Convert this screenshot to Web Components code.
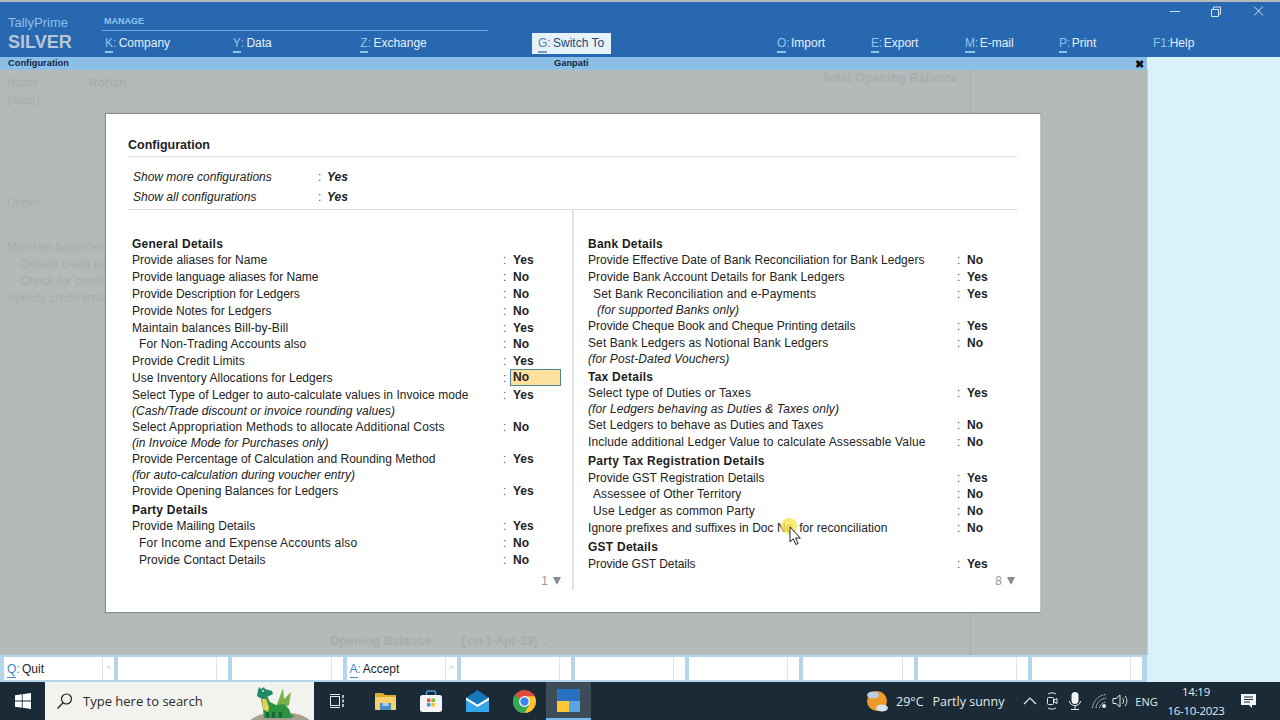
<!DOCTYPE html>
<html lang="en">
<head>
<meta charset="utf-8">
<title>TallyPrime Configuration</title>
<style>
html, body { margin: 0; height: 100%; overflow: hidden; background: #b4b9ba; }
body { font: 12px "Liberation Sans", Arial, sans-serif; }
</style>
</head>
<body>
<tally-app></tally-app>

<script>
"use strict";

/* small helper: every element gets an open shadow root with its own css + html */
function makeEl(tag, render) {
  customElements.define(tag, class extends HTMLElement {
    constructor() {
      super();
      this.attachShadow({ mode: 'open' });
    }
    connectedCallback() {
      this.shadowRoot.innerHTML = render(this);
    }
  });
}

/* ---------- top menu ---------- */
makeEl('menu-item', (el) => `
  <style>
    :host { display: block; width: ${el.getAttribute('w') || 94}px; color: #e6effa; font-size: 12px; line-height: 14px; white-space: nowrap; }
    b { font-weight: normal; color: #8fc3ef; display: inline-block; margin-right: ${el.getAttribute('mr') || -1}px; }
    u { text-decoration: none; display: inline-block; border-bottom: 2px solid #8fc3ef; padding-bottom: 1px; }
    :host([nokey]) u { border-bottom-color: transparent; }
    :host([active]) { color: #24476e; }
    :host([active]) b, :host([active]) u { color: #5d7ea6; border-bottom-color: #7d9cc2; }
  </style>
  <b><u>${el.getAttribute('k')}</u>:</b> <slot></slot>`);

makeEl('window-controls', () => `
  <style>
    :host { display: flex; position: absolute; top: 1px; right: 0; }
    svg { display: block; width: 42px; height: 16px; }
  </style>
  <svg viewBox="0 0 42 16"><path d="M14 8.500h10" stroke="#cfe0f3" stroke-width="1"/></svg>
  <svg viewBox="0 0 42 16"><path d="M13.500 6.500h7v7h-7zM15.500 6.500v-2.500h7v7h-2" fill="none" stroke="#dbe7f5" stroke-width="1"/></svg>
  <svg viewBox="0 0 42 16" style="width:40px"><path d="M15 3.500l9 9M24 3.500l-9 9" stroke="#dbe7f5" stroke-width="1"/></svg>`);

makeEl('tally-header', () => `
  <style>
    :host { display: flex; position: relative; height: 55px; margin-top: 2px; background: #2868b0; box-sizing: border-box; }
    .brand { width: 104px; padding: 13px 0 0 8px; box-sizing: border-box; }
    .brand div:first-child { color: #8cc0ec; font-size: 13px; line-height: 15px; }
    .brand div:last-child { color: #b7c6d8; font-size: 18px; font-weight: bold; line-height: 22px; margin-top: 1px; }
    .manage { width: 386px; margin-left: -2px; }
    .manage small { display: block; height: 15px; margin: 12px 0 0 2px; color: #8fc3ef; font-size: 9px; font-weight: bold; line-height: 14px; }
    .manage hr { border: 0; height: 1px; background: #6fa9e2; margin: 1px 0 5px; }
    .manage .items { display: flex; padding-left: 3px; }
    .switch { width: 79px; height: 21px; margin: 31px 0 0 44px; background: #e5f1fb; padding: 3px 0 0 6px; box-sizing: border-box; }
    .right { display: flex; margin: 34px 0 0 166px; }
  </style>
  <div class="brand"><div>TallyPrime</div><div>SILVER</div></div>
  <div class="manage">
    <small>MANAGE</small><hr>
    <div class="items">
      <menu-item k="K" w="128">Company</menu-item>
      <menu-item k="Y" w="128">Data</menu-item>
      <menu-item k="Z" w="128">Exchange</menu-item>
    </div>
  </div>
  <div class="switch"><menu-item k="G" w="73" active>Switch To</menu-item></div>
  <div class="right">
    <menu-item k="O" mr="-2">Import</menu-item>
    <menu-item k="E" mr="-2">Export</menu-item>
    <menu-item k="M" mr="-2">E-mail</menu-item>
    <menu-item k="P" mr="-2">Print</menu-item>
    <menu-item k="F1" w="50" mr="-4" nokey>Help</menu-item>
  </div>
  <window-controls></window-controls>`);

makeEl('tally-subbar', () => `
  <style>
    :host { display: flex; height: 13px; background: #8cbfe8; color: #10253f; font-size: 9.300px; font-weight: bold; line-height: 13px; }
    .left { width: 554px; padding-left: 8px; box-sizing: border-box; }
    .mid { width: 578px; }
    .x { width: 15px; text-align: center; font-size: 11px; color: #111; line-height: 14px; }
    .side { flex: 1; background: #daf0fb; }
  </style>
  <div class="left">Configuration</div>
  <div class="mid">Ganpati</div>
  <div class="x">✖</div>
  <div class="side"></div>`);

/* ---------- faded ledger form behind the dialog ---------- */
makeEl('ledger-backdrop', () => `
  <style>
    :host { display: flex; flex-direction: column; height: 100%; color: #a8adae; font-size: 12px; line-height: 17px; box-sizing: border-box; padding: 0 0 5px 7px; border-right: 1px solid #a8adae; width: 971px; }
    .name { display: flex; padding-top: 5px; align-items: flex-start; }
    .name span:first-child { width: 82px; }
    b { font-weight: bold; }
    .total { position: absolute; left: 822px; top: 0; font-weight: bold; line-height: 16px; letter-spacing: .33px; }
    i { display: block; }
    .under { margin-top: 86px; }
    .bal { margin-top: 27px; white-space: nowrap; }
    .bal div { padding-left: 13px; }
    .bal div:last-child { padding-left: 0; }
    .open { margin-top: auto; padding-left: 323px; font-weight: bold; letter-spacing: .2px; }
    .open span { margin-left: 27px; letter-spacing: 0; word-spacing: -1px; }
  </style>
  <div class="name"><span>Name</span><b>Rohan</b></div>
  <div class="total">Total Opening Balance</div>
  <i>(alias)</i>
  <div class="under">Under</div>
  <div class="bal">
    Maintain balances
    <div>Default credit pe</div>
    <div>Check for credit</div>
    <div>Specify credit limit</div>
  </div>
  <div class="open">Opening Balance <span>( on 1-Apr-23)&nbsp; :</span></div>`);

/* ---------- dialog ---------- */
makeEl('config-heading', (el) => `
  <style>
    :host { display: block; height: ${el.getAttribute('h') || 16}px; margin-top: ${el.getAttribute('mt') || 0}px; font-size: 12px; font-weight: bold; line-height: 16px; color: #1c1c1c; letter-spacing: .25px; }
  </style>
  <slot></slot>`);

/* ls = per row letter spacing, the original text has hinted widths */
makeEl('config-row', (el) => `
  <style>
    :host { display: grid; grid-template-columns: 1fr 10px 51px; height: ${el.getAttribute('h') || 17}px; line-height: ${el.getAttribute('h') || 17}px; font-size: 12px; color: #222; letter-spacing: ${el.getAttribute('ls') || .05}px; white-space: nowrap; }
    :host([note]) { font-style: italic; }
    .label { padding-left: ${el.getAttribute('indent') || 0}px; }
    .colon { color: #555; padding-left: 3px; }
    .val { font-weight: bold; padding-left: 3px; box-sizing: border-box; letter-spacing: 0; }
    :host([focus]) .val { background: #fde09c; border: 1px solid #4b8a9e; line-height: 15px; padding-left: 2px; height: 17px; margin-top: -1px; }
  </style>
  <div class="label"><slot></slot></div>
  <div class="colon">${el.hasAttribute('value') ? ':' : ''}</div>
  <div class="val">${el.getAttribute('value') || ''}</div>`);

makeEl('config-column', (el) => `
  <style>
    :host { display: flex; flex-direction: column; box-sizing: border-box; padding-top: 26px; }
    .page { display: flex; justify-content: flex-end; align-items: center; gap: 5px; margin-top: auto; height: 18px; line-height: 18px; color: #999; font-size: 12px; }
    .page span { width: 0; height: 0; border: 4.500px solid transparent; border-top: 8px solid #8a8a8a; border-bottom: 0; }
  </style>
  <slot></slot>
  <div class="page">${el.getAttribute('page')}<span></span></div>`);

makeEl('show-row', (el) => `
  <style>
    :host { display: flex; height: 21px; line-height: ${el.getAttribute('lh') || 21}px; padding-left: 5px; font-size: 12px; color: #222; }
    i { width: 185px; }
    span { width: 9px; color: #555; }
    b { font-style: italic; }
  </style>
  <i><slot></slot></i><span>:</span><b>${el.getAttribute('value')}</b>`);

makeEl('config-dialog', () => `
  <style>
    :host { display: block; position: absolute; left: 105px; top: 43px; width: 936px; height: 500px; box-sizing: border-box; background: #fff; border: 1px solid #8a8d8e; border-right-color: #c4c8c8; padding: 22px 23px 0 22px; box-shadow: 0 0 1px #8a8d8e; }
    h1 { margin: 0; height: 19px; font-size: 12.500px; line-height: 19px; font-weight: bold; color: #1d1d1d; border-bottom: 1px solid #dcdcdc; padding-bottom: 1px; }
    .show { padding: 9px 0 1px; border-bottom: 1px solid #dcdcdc; height: 42px; }
    .cols { display: grid; grid-template-columns: 446px 1fr; height: 378px; }
    .cols > config-column:first-child { padding-left: 4px; padding-right: 11px; border-right: 2px solid #e2e2e2; }
    .cols > config-column:last-child { padding-left: 14px; padding-right: 2px; }
  </style>
  <h1>Configuration</h1>
  <div class="show">
    <show-row value="Yes" lh="23">Show more configurations</show-row>
    <show-row value="Yes">Show all configurations</show-row>
  </div>
  <div class="cols">
    <config-column page="1">
      <config-heading>General Details</config-heading>
      <config-row value="Yes">Provide aliases for Name</config-row>
      <config-row value="No" ls="-.01">Provide language aliases for Name</config-row>
      <config-row value="No" ls="-.01">Provide Description for Ledgers</config-row>
      <config-row value="No" ls="0">Provide Notes for Ledgers</config-row>
      <config-row value="Yes" h="16" ls=".12">Maintain balances Bill-by-Bill</config-row>
      <config-row value="No" indent="7" ls=".08">For Non-Trading Accounts also</config-row>
      <config-row value="Yes" ls=".1">Provide Credit Limits</config-row>
      <config-row value="No" focus>Use Inventory Allocations for Ledgers</config-row>
      <config-row value="Yes">Select Type of Ledger to auto-calculate values in Invoice mode</config-row>
      <config-row note h="15">(Cash/Trade discount or invoice rounding values)</config-row>
      <config-row value="No" h="16" ls=".15">Select Appropriation Methods to allocate Additional Costs</config-row>
      <config-row note h="16">(in Invoice Mode for Purchases only)</config-row>
      <config-row value="Yes" h="16" ls=".01">Provide Percentage of Calculation and Rounding Method</config-row>
      <config-row note h="16" ls=".02">(for auto-calculation during voucher entry)</config-row>
      <config-row value="Yes" h="16" ls="0">Provide Opening Balances for Ledgers</config-row>
      <config-heading mt="3">Party Details</config-heading>
      <config-row value="Yes">Provide Mailing Details</config-row>
      <config-row value="No" indent="7" ls=".19">For Income and Expense Accounts also</config-row>
      <config-row value="No" indent="7">Provide Contact Details</config-row>
    </config-column>
    <config-column page="8">
      <config-heading>Bank Details</config-heading>
      <config-row value="No" ls=".02">Provide Effective Date of Bank Reconciliation for Bank Ledgers</config-row>
      <config-row value="Yes" ls=".1">Provide Bank Account Details for Bank Ledgers</config-row>
      <config-row value="Yes" h="16" indent="5" ls=".15">Set Bank Reconciliation and e-Payments</config-row>
      <config-row note h="16" indent="9">(for supported Banks only)</config-row>
      <config-row value="Yes" ls="0">Provide Cheque Book and Cheque Printing details</config-row>
      <config-row value="No" h="16" ls=".1">Set Bank Ledgers as Notional Bank Ledgers</config-row>
      <config-row note h="16" ls=".1">(for Post-Dated Vouchers)</config-row>
      <config-heading mt="2">Tax Details</config-heading>
      <config-row value="Yes" h="16" ls=".15">Select type of Duties or Taxes</config-row>
      <config-row note h="16" ls=".12">(for Ledgers behaving as Duties &amp; Taxes only)</config-row>
      <config-row value="No" ls=".08">Set Ledgers to behave as Duties and Taxes</config-row>
      <config-row value="No" h="16" ls=".15">Include additional Ledger Value to calculate Assessable Value</config-row>
      <config-heading mt="3" h="17">Party Tax Registration Details</config-heading>
      <config-row value="Yes" h="16" ls=".02">Provide GST Registration Details</config-row>
      <config-row value="No" indent="5" ls=".12">Assessee of Other Territory</config-row>
      <config-row value="No" indent="5" ls=".12">Use Ledger as common Party</config-row>
      <config-row value="No">Ignore prefixes and suffixes in Doc No. for reconciliation</config-row>
      <config-heading mt="2" h="17">GST Details</config-heading>
      <config-row value="Yes" h="16" ls="-.05">Provide GST Details</config-row>
    </config-column>
  </div>`);

makeEl('mouse-pointer', () => `
  <style>
    :host { display: block; position: absolute; left: 778px; top: 447px; width: 28px; height: 32px; pointer-events: none; }
    svg { display: block; }
  </style>
  <svg width="28" height="32" viewBox="0 0 28 32">
    <circle cx="11" cy="9" r="8" fill="#f7e34a" opacity=".8"/>
    <path d="M12 10v15l3.300-3.200 2.500 5.700 2.300-1-2.500-5.400h4.700z" fill="#fff" stroke="#222" stroke-width="1"/>
  </svg>`);

/* ---------- bottom button bar ---------- */
makeEl('bar-button', (el) => `
  <style>
    :host { display: flex; height: 23px; background: #fff; font-size: 12px; line-height: 24px; color: #222; }
    .txt { flex: 1; padding-left: 3px; border-right: 1px solid #dde3e7; white-space: nowrap; }
    b { font-weight: normal; color: #3c86c4; margin-right: -1px; }
    u { text-decoration: none; display: inline-block; border-bottom: 1px solid #3c86c4; line-height: 15px; }
    .up { width: 11px; text-align: center; color: #c5cdd3; font-size: 9px; }
  </style>
  <div class="txt">${el.hasAttribute('k') ? `<b><u>${el.getAttribute('k')}</u>:</b> ` : ''}<slot></slot></div>
  <div class="up">${el.hasAttribute('k') ? '^' : ''}</div>`);

makeEl('button-bar', () => `
  <style>
    :host { display: grid; grid-template-columns: repeat(10, 1fr); gap: 4px; height: 27px; width: 1147px; box-sizing: border-box; padding: 2px 5px 2px 4px; background: #b4d5ec; }
  </style>
  <bar-button k="Q">Quit</bar-button>
  <bar-button></bar-button>
  <bar-button></bar-button>
  <bar-button k="A">Accept</bar-button>
  <bar-button></bar-button>
  <bar-button></bar-button>
  <bar-button></bar-button>
  <bar-button></bar-button>
  <bar-button></bar-button>
  <bar-button></bar-button>`);

/* ---------- windows taskbar ---------- */
makeEl('task-icon', (el) => `
  <style>
    :host { display: flex; align-items: center; justify-content: center; width: ${el.getAttribute('w') || 46}px; height: 38px; box-sizing: border-box; }
    :host([active]) { background: #3e4c58; border-bottom: 2px solid #76b9ed; }
  </style>
  <slot></slot>`);

makeEl('win-taskbar', () => `
  <style>
    :host { display: flex; align-items: center; height: 38px; background: #1a2a36; color: #e4e8ea; font-family: "Open Sans", sans-serif; }
    .search { display: flex; align-items: center; width: 269px; height: 38px; background: #f2f2ef; color: #2b2b2b; font-size: 13px; box-sizing: border-box; padding-left: 11px; position: relative; overflow: hidden; }
    .search span { margin-left: 9px; }
    .dragon { position: absolute; left: 203px; top: 3px; }
    .icons { display: flex; }
    .tray { display: flex; align-items: center; margin-left: auto; height: 38px; padding-right: 13px; }
    .temp { font-size: 12.500px; margin-left: 7px; width: 125px; white-space: nowrap; }
    .temp span { margin-left: 9px; }
    .tray svg { display: block; }
    .eng { font-size: 11px; width: 29px; margin-left: 4px; text-align: center; }
    .clock { width: 70px; font-size: 11.500px; line-height: 19px; text-align: center; letter-spacing: -.3px; }
    .start { display: flex; justify-content: center; align-items: center; width: 45px; }
  </style>
  <div class="start">
    <svg width="16" height="16" viewBox="0 0 16 16"><path d="M0 2.300l6.800-1v6.300H0zM7.600 1.200L16 0v7.600H7.600zM0 8.400h6.800v6.300l-6.800-1zM7.600 8.400H16V16l-8.400-1.200z" fill="#fff"/></svg>
  </div>
  <div class="search">
    <svg width="18" height="18" viewBox="0 0 18 18"><circle cx="10.500" cy="7" r="5" fill="none" stroke="#222" stroke-width="1.200"/><path d="M7 10.800L1.500 16.500" stroke="#222" stroke-width="1.300"/></svg>
    <span>Type here to search</span>
    <svg class="dragon" width="66" height="35" viewBox="0 0 66 35">
      <ellipse cx="32" cy="40" rx="32" ry="13" fill="#a89f8f"/>
      <path d="M28 22L35 3l1 11 7-7-2 13-11 6z" fill="#7ab04a"/>
      <path d="M13 14l6-3 3 6 6 3 8-1 5 5 2 6 4 1-4 2H16l-1-9z" fill="#2c9440"/>
      <path d="M14 14h4l3 8-1 5-5-3z" fill="#e6cf55"/>
      <path d="M10 5l1-3 2 2 3-2 1 2 7 2 1 3-6 3-3 2-4-1-3-2z" fill="#1f8a6e"/>
      <circle cx="15" cy="6" r="1" fill="#f4e9a0"/>
      <path d="M18 27h3v6h-3zM24 27h3v6h-3zM31 27h3v6h-3z" fill="#176a38"/>
    </svg>
  </div>
  <div class="icons">
    <task-icon>
      <svg width="16" height="14" viewBox="0 0 16 14"><path d="M1 .500h10M1 13.500h10" stroke="#e8e8e8"/><rect x="1.500" y="2.500" width="9" height="9" fill="none" stroke="#e8e8e8"/><path d="M14 1v3M14 5.500v3M14 10v3" stroke="#e8e8e8" stroke-width="1.500"/></svg>
    </task-icon>
    <task-icon w="50">
      <svg width="21" height="17" viewBox="0 0 21 17"><path d="M0 1a1 1 0 0 1 1-1h7l2 2h10a1 1 0 0 1 1 1v3H0z" fill="#e0ab32"/><rect x="0" y="4" width="21" height="13" rx="1" fill="#f6d26c"/><rect x="5" y="10" width="11" height="7" fill="#4a8cc4"/><rect x="7.500" y="10" width="6" height="3" fill="#a8d0ea"/></svg>
    </task-icon>
    <task-icon w="42">
      <svg width="22" height="22" viewBox="0 0 22 22"><path d="M6.500 5V2.500a1.500 1.500 0 0 1 1.500-1.500h6a1.500 1.500 0 0 1 1.500 1.500V5" fill="none" stroke="#4aa2dc" stroke-width="1.500"/><rect x="0" y="5" width="22" height="17" rx="2.500" fill="#f2f4f5"/><rect x="7" y="8.500" width="3.500" height="3.500" fill="#e75a32"/><rect x="11.500" y="8.500" width="3.500" height="3.500" fill="#7fba3c"/><rect x="7" y="13" width="3.500" height="3.500" fill="#2f9ae0"/><rect x="11.500" y="13" width="3.500" height="3.500" fill="#f5c02c"/></svg>
    </task-icon>
    <task-icon w="50">
      <svg width="23" height="22" viewBox="0 0 23 22"><path d="M0 8L11.500 0 23 8v14H0z" fill="#1677bd"/><path d="M0 8.500l11.500 7 11.500-7V21a1 1 0 0 1-1 1H1a1 1 0 0 1-1-1z" fill="#34a6ea"/><path d="M0 7.500l11.500 7 11.500-7v2.500l-11.500 7L0 10z" fill="#fff"/></svg>
    </task-icon>
    <task-icon w="44">
      <svg width="23" height="23" viewBox="0 0 22 22"><circle cx="11" cy="11" r="11" fill="#dd4b3d"/><path d="M11 6h9.700a11 11 0 0 1-9.900 16L16 13z" fill="#f9c42e"/><path d="M2 4.500a11 11 0 0 0 8.800 17.500L16 13l-5 1z" fill="#35a853"/><circle cx="11" cy="11" r="5.200" fill="#fff"/><circle cx="11" cy="11" r="4" fill="#3e82ee"/></svg>
    </task-icon>
    <task-icon w="45" active>
      <svg width="23" height="23" viewBox="0 0 23 23"><rect x="0" y="0" width="23" height="12" fill="#2870c0"/><rect x="0" y="12" width="12" height="11" fill="#fbc83c"/><rect x="12" y="12" width="11" height="11" fill="#5aa5e3"/></svg>
    </task-icon>
  </div>
  <div class="tray">
    <svg width="24" height="24" viewBox="0 0 24 24"><circle cx="12" cy="12" r="10" fill="#ee9a2b"/><ellipse cx="8" cy="6" rx="6" ry="3.500" fill="#b9cfe2"/><ellipse cx="17" cy="19" rx="6" ry="3.500" fill="#d7e3ee"/></svg>
    <div class="temp">29°C<span>Partly sunny</span></div>
    <svg width="16" height="10" viewBox="0 0 16 10" style="margin-left:1px"><path d="M2 8l6-6 6 6" fill="none" stroke="#e4e8ea" stroke-width="1.200"/></svg>
    <svg width="14" height="20" viewBox="0 0 14 20" style="margin-left:7px"><path d="M3 3c2-1.500 6-1.500 8 0M3 17c2 1.500 6 1.500 8 0" fill="none" stroke="#e4e8ea"/><rect x="2.500" y="6.500" width="6" height="7" rx="1" fill="none" stroke="#e4e8ea"/><path d="M9 9l3-1.500v5L9 11z" fill="none" stroke="#e4e8ea"/></svg>
    <svg width="14" height="20" viewBox="0 0 14 20" style="margin-left:9px"><rect x="3.500" y="1" width="7" height="12" rx="3.500" fill="#f2f4f5"/><path d="M1.500 10c0 6 11 6 11 0M7 15v3M3 18.500h8" fill="none" stroke="#e4e8ea"/></svg>
    <svg width="16" height="16" viewBox="0 0 16 16" style="margin-left:9px"><path d="M1.500 15C2 8 8 2 15 1.500M5 15c.5-5 4-9 10-9.800M8.500 15c.5-3 3-5.500 6.500-6" fill="none" stroke="#c9d0d5" stroke-dasharray="1.500 .8"/><circle cx="13" cy="13" r="2" fill="#e4e8ea"/></svg>
    <svg width="16" height="16" viewBox="0 0 16 16" style="margin-left:5px"><path d="M1 5.500h3l4-3.500v12l-4-3.500H1z" fill="none" stroke="#e4e8ea"/><path d="M10.500 5c1.500 1.500 1.500 4.500 0 6M13 3c2.500 3 2.500 7 0 10" fill="none" stroke="#e4e8ea"/></svg>
    <div class="eng">ENG</div>
    <div class="clock">14:19<br>16-10-2023</div>
    <task-icon w="36">
      <svg width="16" height="15" viewBox="0 0 16 15"><path d="M0 0h15v11h-4v3l-3-3H0z" fill="#f2f4f5"/><path d="M3 3h9M3 5.500h9M3 8h6" stroke="#1a2a36"/></svg>
    </task-icon>
  </div>`);

/* ---------- whole page ---------- */
makeEl('tally-app', () => `
  <style>
    :host { display: flex; flex-direction: column; width: 1280px; height: 720px; background: #b4b9ba; }
    .main { display: flex; height: 585px; }
    .work { position: relative; width: 1147px; background: #b4b9ba; }
    .side { flex: 1; background: #daf0fb; border-left: 1px solid #a9cfe9; }
    .bottom { display: flex; background: #daf0fb; }
  </style>
  <tally-header></tally-header>
  <tally-subbar></tally-subbar>
  <div class="main">
    <div class="work">
      <ledger-backdrop></ledger-backdrop>
      <config-dialog></config-dialog>
      <mouse-pointer></mouse-pointer>
    </div>
    <div class="side"></div>
  </div>
  <div class="bottom"><button-bar></button-bar></div>
  <win-taskbar></win-taskbar>`);
</script>
</body>
</html>
